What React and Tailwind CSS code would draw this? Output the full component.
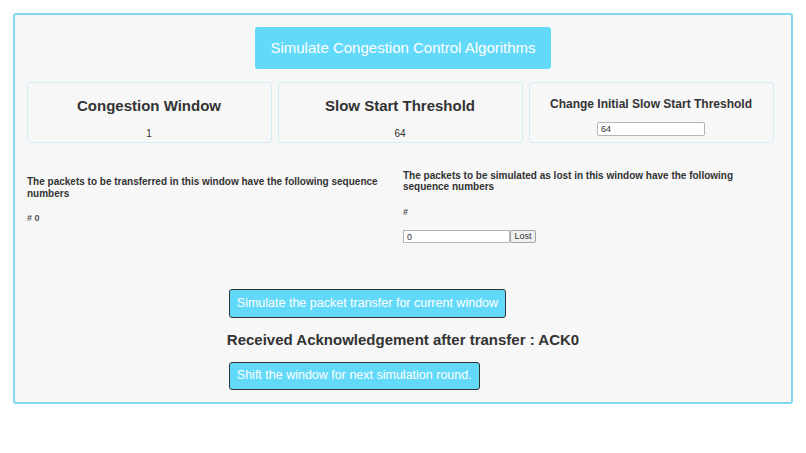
import { useState } from 'react'

function StatCard ({ title, children, small }) {
    return (
        <div className="w-[245px] h-[61.6px] border border-[#d3edf6] rounded-[3px] flex flex-col items-center pt-[14.3px]">
            <h2 className={small
                ? "text-[12px] leading-[14px] font-bold text-[#333]"
                : "text-[15px] leading-[18px] font-bold text-[#333]"}>
                {title}
            </h2>
            {children}
        </div>
    );
}

export default function App () {
    const [threshold, setThreshold] = useState('64');
    const [lost, setLost] = useState('0');

    return (
        <div className="w-[806px] h-[453px] bg-white pt-[13px] font-['Liberation_Sans',Arial,sans-serif] text-[#333]">
            <div className="w-[780px] mx-[13px] border-2 border-[#80d7ef] rounded-[3px] bg-[#f7f7f7] pb-[12px]">
                <div className="flex justify-center pt-[12px]">
                    <button className="w-[296px] h-[42px] rounded-[3px] bg-[#63d9fa] text-white text-[15px]">
                        Simulate Congestion Control Algorithms
                    </button>
                </div>

                <div className="flex gap-[6px] pl-[11.5px] mt-[12.7px]">
                    <StatCard title="Congestion Window">
                        <span className="mt-[13px] text-[10px] leading-[12px]">1</span>
                    </StatCard>
                    <StatCard title="Slow Start Threshold">
                        <span className="mt-[13px] text-[10px] leading-[12px]">64</span>
                    </StatCard>
                    <StatCard title="Change Initial Slow Start Threshold" small>
                        <input
                            value={threshold}
                            onChange={e => setThreshold(e.target.value)}
                            className="mt-[11px] w-[108px] h-[14px] bg-white border border-[#b5b5b5] rounded-[2px] px-[3px] text-[9px] text-[#333] outline-none"
                        />
                    </StatCard>
                </div>

                <div className="flex items-start mt-[26.5px]">
                    <div className="w-[388px] pl-[12px] pt-[6.6px]">
                        <h4 className="text-[10px] leading-[11.7px] font-bold">
                            The packets to be transferred in this window have the following sequence numbers
                        </h4>
                        <p className="mt-[12.4px] text-[9px] leading-[12px] font-bold text-[#555]"># 0</p>
                    </div>
                    <div className="w-[388px] pr-[20px]">
                        <h4 className="text-[10px] leading-[11.7px] font-bold">
                            The packets to be simulated as lost in this window have the following sequence numbers
                        </h4>
                        <p className="mt-[12.4px] text-[9px] leading-[12px] font-bold text-[#555]">#</p>
                        <div className="flex mt-[12.3px]">
                            <input
                                value={lost}
                                onChange={e => setLost(e.target.value)}
                                className="w-[107px] h-[13.3px] bg-white border border-[#b5b5b5] px-[3px] text-[9px] text-[#333] outline-none"
                            />
                            <button className="w-[26px] h-[13.3px] bg-[#efefef] border border-[#a5a5a5] rounded-[2px] text-[9px] leading-[11px] text-[#333]">
                                Lost
                            </button>
                        </div>
                    </div>
                </div>

                <div className="w-fit mx-auto flex flex-col items-start mt-[46px]">
                    <button className="ml-[2px] h-[28.4px] px-[7px] bg-[#63d9fa] border-[1.5px] border-[#333] rounded-[3px] text-white text-[12.5px]">
                        Simulate the packet transfer for current window
                    </button>
                    <h3 className="mt-[13.8px] text-[15px] leading-[17px] font-bold">
                        Received Acknowledgement after transfer : ACK0
                    </h3>
                    <button className="ml-[2px] mt-[13.2px] h-[28.4px] px-[7px] bg-[#63d9fa] border-[1.5px] border-[#333] rounded-[3px] text-white text-[12.5px]">
                        Shift the window for next simulation round.
                    </button>
                </div>
            </div>
        </div>
    );
}
